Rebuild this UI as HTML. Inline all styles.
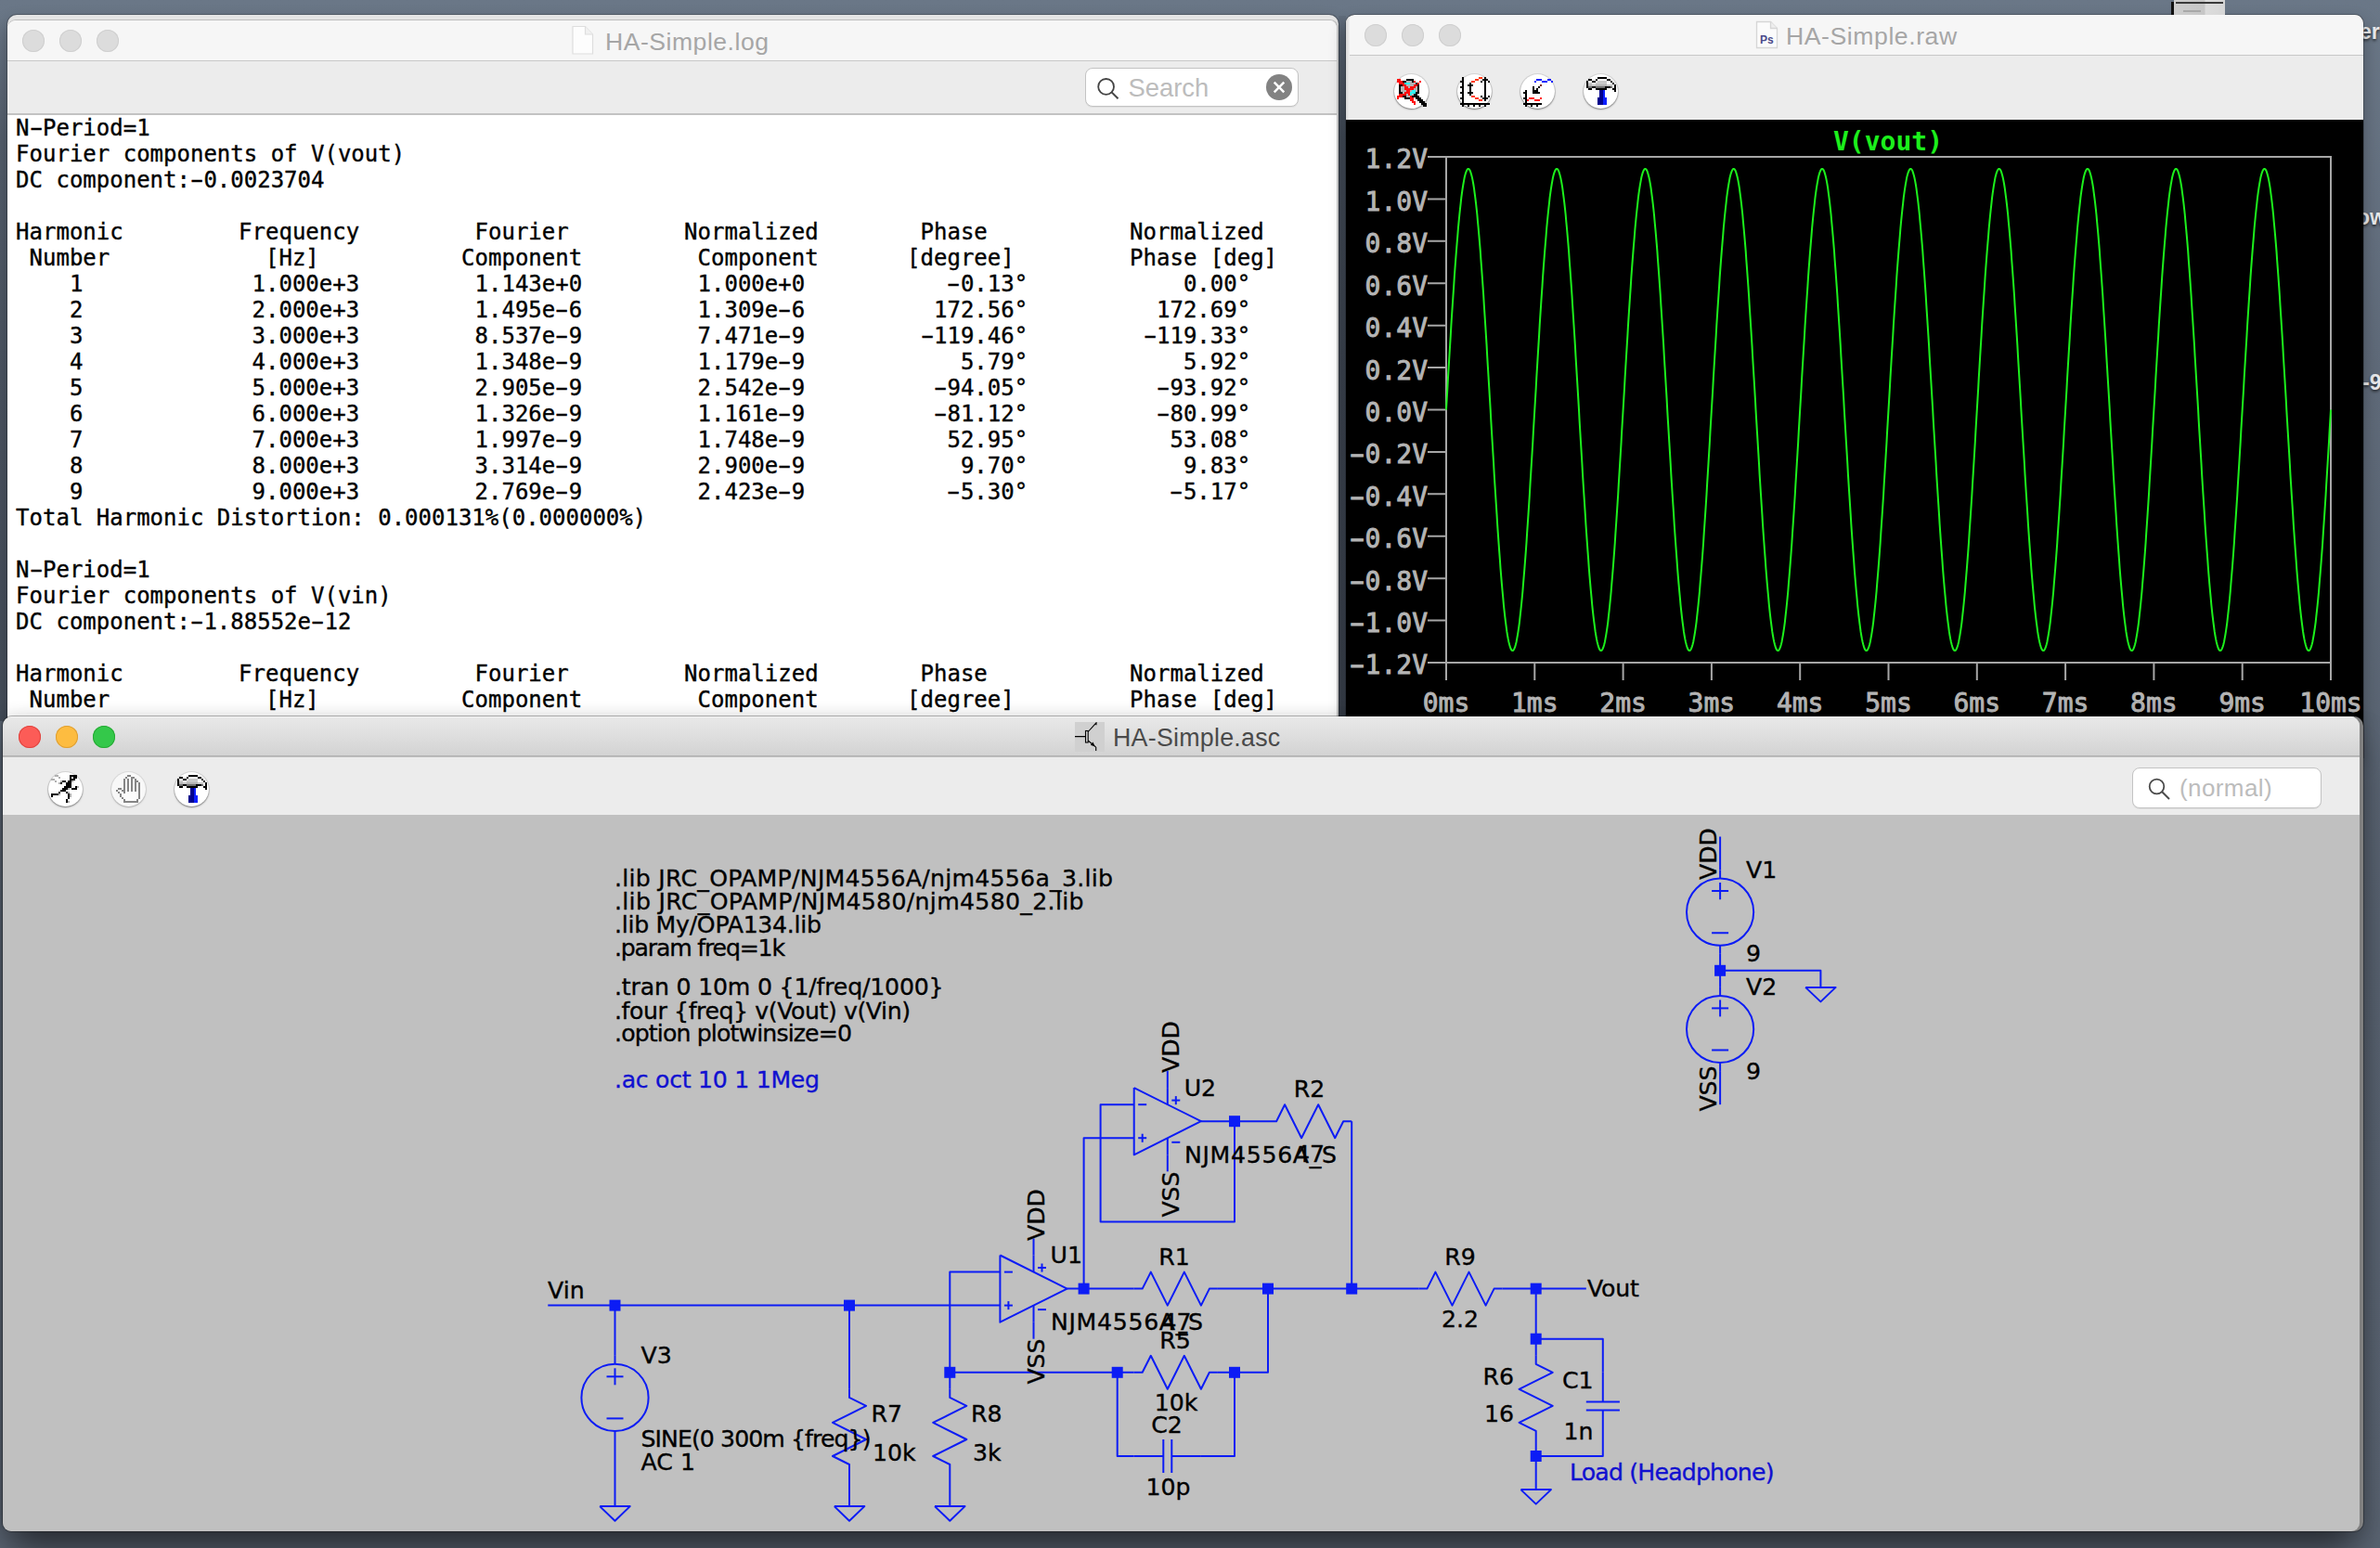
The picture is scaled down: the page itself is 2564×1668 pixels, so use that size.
<!DOCTYPE html>
<html lang="en">
<head>
<meta charset="utf-8">
<title>HA-Simple</title>
<style>
*{box-sizing:border-box;margin:0;padding:0}
html,body{width:2564px;height:1668px;overflow:hidden}
body{position:relative;font-family:"Liberation Sans",sans-serif;
 background:linear-gradient(180deg,#6a7787 0px,#5f6a79 400px,#586270 1000px,#5a6472 1668px);}
.abs{position:absolute}
.win{position:absolute;overflow:hidden}
.tl{position:absolute;width:24px;height:24px;border-radius:50%;}
.tl.off{background:#dcdcdc;box-shadow:inset 0 0 0 1px #cfcfcf}
.title{position:absolute;left:0;right:0;text-align:center;font-size:26px;white-space:nowrap}
.search{position:absolute;background:#fff;border:1px solid #c3c3c3;border-radius:8px;box-shadow:0 1px 0 rgba(0,0,0,.06)}
.search span{position:absolute;font-size:26px;color:#bcbcbc}
.ic{position:absolute;width:37px;height:37px;border-radius:50%;background:#fff;box-shadow:0 1px 2px rgba(0,0,0,.45),0 0 0 1px rgba(0,0,0,.08)}
.ic svg{position:absolute;left:0;top:0}
pre.log{position:absolute;left:0;top:102px;-webkit-text-stroke:.36px #000;width:1433px;padding-left:9.1px;font-family:"DejaVu Sans Mono","Liberation Mono",monospace;font-size:24px;line-height:28px;color:#000;tab-size:240px;-moz-tab-size:240px;white-space:pre;letter-spacing:0}
pre.log .h{display:inline-block;transform:scaleX(1.75)}
svg text{white-space:pre}
</style>
</head>
<body>

<!-- stacked window edges behind log window -->
<div class="abs" style="left:8px;top:16px;width:1434px;height:800px;border-radius:10px 10px 0 0;background:#e4e4e4;box-shadow:0 0 0 1px rgba(0,0,0,.22),0 8px 18px rgba(0,0,0,.3)"></div>

<!-- LOG WINDOW -->
<div class="win" id="logwin" style="left:8px;top:22px;width:1434px;height:780px;border-radius:9px 9px 0 0;background:#fff;box-shadow:0 -1px 0 #bdbdbd;border-right:2px solid #cbcbcb">
  <div class="abs" style="left:0;top:0;width:100%;height:44px;background:#f6f6f6;border-bottom:1px solid #c8c8c8"></div>
  <div class="tl off" style="left:16px;top:10px"></div>
  <div class="tl off" style="left:56px;top:10px"></div>
  <div class="tl off" style="left:96px;top:10px"></div>
  <svg class="abs" style="left:607px;top:5px" width="26" height="33" viewBox="0 0 26 33"><path d="M2 1.500h13.500l8 8.500v21h-21.500z" fill="#fdfdfd" stroke="#dedede" stroke-width="1.2"/><path d="M15.500 1.500v8.500h8" fill="#f1f1f1" stroke="#dedede" stroke-width="1.2"/></svg>
  <div class="title" style="top:7.500px;left:644px;right:auto;color:#a6a6a6;letter-spacing:.5px;font-size:26.6px">HA-Simple.log</div>
  <div class="abs" style="left:0;top:44px;width:100%;height:58px;background:#ececec;border-bottom:2px solid #c2c2c2"></div>
  <div class="search" style="left:1161px;top:51px;width:230px;height:42px">
    <svg class="abs" style="left:11px;top:9px" width="26" height="26" viewBox="0 0 26 26"><circle cx="10.6" cy="10.4" r="8.4" fill="none" stroke="#454545" stroke-width="1.8"/><path d="M16.600 16.400L23.500 23.300" stroke="#454545" stroke-width="2"/></svg>
    <span style="left:45.500px;top:4.500px;font-size:27.4px">Search</span>
    <svg class="abs" style="left:193px;top:5px" width="30" height="30" viewBox="0 0 30 30"><circle cx="15" cy="15" r="14" fill="#828282"/><path d="M9.700 9.700l10.600 10.600M20.300 9.700l-10.600 10.600" stroke="#fff" stroke-width="2.500"/></svg>
  </div>
<pre class="log">N<span class="h">-</span>Period=1
Fourier components of V(vout)
DC component:<span class="h">-</span>0.0023704

Harmonic	Frequency	 Fourier 	Normalized	 Phase  	Normalized
 Number 	  [Hz]   	Component	 Component	[degree]	Phase [deg]
    1   	 1.000e+3	 1.143e+0	 1.000e+0	   <span class="h">-</span>0.13°	    0.00°
    2   	 2.000e+3	 1.495e<span class="h">-</span>6	 1.309e<span class="h">-</span>6	  172.56°	  172.69°
    3   	 3.000e+3	 8.537e<span class="h">-</span>9	 7.471e<span class="h">-</span>9	 <span class="h">-</span>119.46°	 <span class="h">-</span>119.33°
    4   	 4.000e+3	 1.348e<span class="h">-</span>9	 1.179e<span class="h">-</span>9	    5.79°	    5.92°
    5   	 5.000e+3	 2.905e<span class="h">-</span>9	 2.542e<span class="h">-</span>9	  <span class="h">-</span>94.05°	  <span class="h">-</span>93.92°
    6   	 6.000e+3	 1.326e<span class="h">-</span>9	 1.161e<span class="h">-</span>9	  <span class="h">-</span>81.12°	  <span class="h">-</span>80.99°
    7   	 7.000e+3	 1.997e<span class="h">-</span>9	 1.748e<span class="h">-</span>9	   52.95°	   53.08°
    8   	 8.000e+3	 3.314e<span class="h">-</span>9	 2.900e<span class="h">-</span>9	    9.70°	    9.83°
    9   	 9.000e+3	 2.769e<span class="h">-</span>9	 2.423e<span class="h">-</span>9	   <span class="h">-</span>5.30°	   <span class="h">-</span>5.17°
Total Harmonic Distortion: 0.000131%(0.000000%)

N<span class="h">-</span>Period=1
Fourier components of V(vin)
DC component:<span class="h">-</span>1.88552e<span class="h">-</span>12

Harmonic	Frequency	 Fourier 	Normalized	 Phase  	Normalized
 Number 	  [Hz]   	Component	 Component	[degree]	Phase [deg]
</pre>
</div>

<!-- RAW WINDOW -->
<div class="abs" style="left:2542px;top:21px;font-size:23px;font-weight:bold;color:#e9eaec;text-shadow:0 2px 3px rgba(0,0,0,.6);white-space:nowrap">er</div>
<div class="abs" style="left:2539px;top:221px;font-size:23px;font-weight:bold;color:#e9eaec;text-shadow:0 2px 3px rgba(0,0,0,.6);white-space:nowrap">ow</div>
<div class="abs" style="left:2545px;top:399px;font-size:23px;font-weight:bold;color:#e9eaec;text-shadow:0 2px 3px rgba(0,0,0,.6);white-space:nowrap">-9</div>
<div class="win" id="rawwin" style="left:1450px;top:16px;width:1096px;height:800px;border-radius:9px 9px 0 0;background:#000;box-shadow:0 0 0 1px rgba(0,0,0,.22),0 8px 18px rgba(0,0,0,.3)">
  <div class="abs" style="left:0;top:112px"><svg class="plot" width="1096" height="650" viewBox="0 0 1096 650"><rect x="0" y="0" width="1096" height="650" fill="#000"/><rect x="108" y="41" width="953" height="545" fill="none" stroke="#a6a6a6" stroke-width="2"/><path d="M88 41.0H108M88 86.4H108M88 131.8H108M88 177.2H108M88 222.7H108M88 268.1H108M88 313.5H108M88 358.9H108M88 404.3H108M88 449.8H108M88 495.2H108M88 540.6H108M88 586.0H108M108.0 586V605M203.3 586V605M298.6 586V605M393.9 586V605M489.2 586V605M584.5 586V605M679.8 586V605M775.1 586V605M870.4 586V605M965.7 586V605M1061.0 586V605" stroke="#a6a6a6" stroke-width="2" fill="none"/><polyline points="108.0,313.5 108.7,301.9 109.4,290.2 110.0,278.7 110.7,267.2 111.4,255.7 112.1,244.4 112.8,233.3 113.4,222.3 114.1,211.5 114.8,200.9 115.5,190.5 116.2,180.4 116.8,170.5 117.5,160.9 118.2,151.7 118.9,142.7 119.6,134.1 120.3,125.9 120.9,118.0 121.6,110.6 122.3,103.5 123.0,96.9 123.7,90.7 124.3,84.9 125.0,79.6 125.7,74.8 126.4,70.5 127.1,66.6 127.7,63.3 128.4,60.5 129.1,58.1 129.8,56.3 130.5,55.0 131.1,54.2 131.8,53.9 132.5,54.2 133.2,55.0 133.9,56.3 134.5,58.1 135.2,60.5 135.9,63.3 136.6,66.6 137.3,70.5 138.0,74.8 138.6,79.6 139.3,84.9 140.0,90.7 140.7,96.9 141.4,103.5 142.0,110.6 142.7,118.0 143.4,125.9 144.1,134.1 144.8,142.7 145.4,151.7 146.1,160.9 146.8,170.5 147.5,180.4 148.2,190.5 148.8,200.9 149.5,211.5 150.2,222.3 150.9,233.3 151.6,244.4 152.2,255.7 152.9,267.2 153.6,278.7 154.3,290.2 155.0,301.9 155.7,313.5 156.3,325.1 157.0,336.8 157.7,348.3 158.4,359.8 159.1,371.3 159.7,382.6 160.4,393.7 161.1,404.7 161.8,415.5 162.5,426.1 163.1,436.5 163.8,446.6 164.5,456.5 165.2,466.1 165.9,475.3 166.5,484.3 167.2,492.9 167.9,501.1 168.6,509.0 169.3,516.4 169.9,523.5 170.6,530.1 171.3,536.3 172.0,542.1 172.7,547.4 173.3,552.2 174.0,556.5 174.7,560.4 175.4,563.7 176.1,566.5 176.8,568.9 177.4,570.7 178.1,572.0 178.8,572.8 179.5,573.1 180.2,572.8 180.8,572.0 181.5,570.7 182.2,568.9 182.9,566.5 183.6,563.7 184.2,560.4 184.9,556.5 185.6,552.2 186.3,547.4 187.0,542.1 187.6,536.3 188.3,530.1 189.0,523.5 189.7,516.4 190.4,509.0 191.0,501.1 191.7,492.9 192.4,484.3 193.1,475.3 193.8,466.1 194.5,456.5 195.1,446.6 195.8,436.5 196.5,426.1 197.2,415.5 197.9,404.7 198.5,393.7 199.2,382.6 199.9,371.3 200.6,359.8 201.3,348.3 201.9,336.8 202.6,325.1 203.3,313.5 204.0,301.9 204.7,290.2 205.3,278.7 206.0,267.2 206.7,255.7 207.4,244.4 208.1,233.3 208.7,222.3 209.4,211.5 210.1,200.9 210.8,190.5 211.5,180.4 212.1,170.5 212.8,160.9 213.5,151.7 214.2,142.7 214.9,134.1 215.6,125.9 216.2,118.0 216.9,110.6 217.6,103.5 218.3,96.9 219.0,90.7 219.6,84.9 220.3,79.6 221.0,74.8 221.7,70.5 222.4,66.6 223.0,63.3 223.7,60.5 224.4,58.1 225.1,56.3 225.8,55.0 226.4,54.2 227.1,53.9 227.8,54.2 228.5,55.0 229.2,56.3 229.8,58.1 230.5,60.5 231.2,63.3 231.9,66.6 232.6,70.5 233.3,74.8 233.9,79.6 234.6,84.9 235.3,90.7 236.0,96.9 236.7,103.5 237.3,110.6 238.0,118.0 238.7,125.9 239.4,134.1 240.1,142.7 240.7,151.7 241.4,160.9 242.1,170.5 242.8,180.4 243.5,190.5 244.1,200.9 244.8,211.5 245.5,222.3 246.2,233.3 246.9,244.4 247.5,255.7 248.2,267.2 248.9,278.7 249.6,290.2 250.3,301.9 251.0,313.5 251.6,325.1 252.3,336.8 253.0,348.3 253.7,359.8 254.4,371.3 255.0,382.6 255.7,393.7 256.4,404.7 257.1,415.5 257.8,426.1 258.4,436.5 259.1,446.6 259.8,456.5 260.5,466.1 261.2,475.3 261.8,484.3 262.5,492.9 263.2,501.1 263.9,509.0 264.6,516.4 265.2,523.5 265.9,530.1 266.6,536.3 267.3,542.1 268.0,547.4 268.6,552.2 269.3,556.5 270.0,560.4 270.7,563.7 271.4,566.5 272.1,568.9 272.7,570.7 273.4,572.0 274.1,572.8 274.8,573.1 275.5,572.8 276.1,572.0 276.8,570.7 277.5,568.9 278.2,566.5 278.9,563.7 279.5,560.4 280.2,556.5 280.9,552.2 281.6,547.4 282.3,542.1 282.9,536.3 283.6,530.1 284.3,523.5 285.0,516.4 285.7,509.0 286.3,501.1 287.0,492.9 287.7,484.3 288.4,475.3 289.1,466.1 289.8,456.5 290.4,446.6 291.1,436.5 291.8,426.1 292.5,415.5 293.2,404.7 293.8,393.7 294.5,382.6 295.2,371.3 295.9,359.8 296.6,348.3 297.2,336.8 297.9,325.1 298.6,313.5 299.3,301.9 300.0,290.2 300.6,278.7 301.3,267.2 302.0,255.7 302.7,244.4 303.4,233.3 304.0,222.3 304.7,211.5 305.4,200.9 306.1,190.5 306.8,180.4 307.4,170.5 308.1,160.9 308.8,151.7 309.5,142.7 310.2,134.1 310.9,125.9 311.5,118.0 312.2,110.6 312.9,103.5 313.6,96.9 314.3,90.7 314.9,84.9 315.6,79.6 316.3,74.8 317.0,70.5 317.7,66.6 318.3,63.3 319.0,60.5 319.7,58.1 320.4,56.3 321.1,55.0 321.7,54.2 322.4,53.9 323.1,54.2 323.8,55.0 324.5,56.3 325.1,58.1 325.8,60.5 326.5,63.3 327.2,66.6 327.9,70.5 328.6,74.8 329.2,79.6 329.9,84.9 330.6,90.7 331.3,96.9 332.0,103.5 332.6,110.6 333.3,118.0 334.0,125.9 334.7,134.1 335.4,142.7 336.0,151.7 336.7,160.9 337.4,170.5 338.1,180.4 338.8,190.5 339.4,200.9 340.1,211.5 340.8,222.3 341.5,233.3 342.2,244.4 342.8,255.7 343.5,267.2 344.2,278.7 344.9,290.2 345.6,301.9 346.2,313.5 346.9,325.1 347.6,336.8 348.3,348.3 349.0,359.8 349.7,371.3 350.3,382.6 351.0,393.7 351.7,404.7 352.4,415.5 353.1,426.1 353.7,436.5 354.4,446.6 355.1,456.5 355.8,466.1 356.5,475.3 357.1,484.3 357.8,492.9 358.5,501.1 359.2,509.0 359.9,516.4 360.5,523.5 361.2,530.1 361.9,536.3 362.6,542.1 363.3,547.4 363.9,552.2 364.6,556.5 365.3,560.4 366.0,563.7 366.7,566.5 367.4,568.9 368.0,570.7 368.7,572.0 369.4,572.8 370.1,573.1 370.8,572.8 371.4,572.0 372.1,570.7 372.8,568.9 373.5,566.5 374.2,563.7 374.8,560.4 375.5,556.5 376.2,552.2 376.9,547.4 377.6,542.1 378.2,536.3 378.9,530.1 379.6,523.5 380.3,516.4 381.0,509.0 381.6,501.1 382.3,492.9 383.0,484.3 383.7,475.3 384.4,466.1 385.1,456.5 385.7,446.6 386.4,436.5 387.1,426.1 387.8,415.5 388.5,404.7 389.1,393.7 389.8,382.6 390.5,371.3 391.2,359.8 391.9,348.3 392.5,336.8 393.2,325.1 393.9,313.5 394.6,301.9 395.3,290.2 395.9,278.7 396.6,267.2 397.3,255.7 398.0,244.4 398.7,233.3 399.3,222.3 400.0,211.5 400.7,200.9 401.4,190.5 402.1,180.4 402.7,170.5 403.4,160.9 404.1,151.7 404.8,142.7 405.5,134.1 406.2,125.9 406.8,118.0 407.5,110.6 408.2,103.5 408.9,96.9 409.6,90.7 410.2,84.9 410.9,79.6 411.6,74.8 412.3,70.5 413.0,66.6 413.6,63.3 414.3,60.5 415.0,58.1 415.7,56.3 416.4,55.0 417.0,54.2 417.7,53.9 418.4,54.2 419.1,55.0 419.8,56.3 420.4,58.1 421.1,60.5 421.8,63.3 422.5,66.6 423.2,70.5 423.9,74.8 424.5,79.6 425.2,84.9 425.9,90.7 426.6,96.9 427.3,103.5 427.9,110.6 428.6,118.0 429.3,125.9 430.0,134.1 430.7,142.7 431.3,151.7 432.0,160.9 432.7,170.5 433.4,180.4 434.1,190.5 434.7,200.9 435.4,211.5 436.1,222.3 436.8,233.3 437.5,244.4 438.1,255.7 438.8,267.2 439.5,278.7 440.2,290.2 440.9,301.9 441.5,313.5 442.2,325.1 442.9,336.8 443.6,348.3 444.3,359.8 445.0,371.3 445.6,382.6 446.3,393.7 447.0,404.7 447.7,415.5 448.4,426.1 449.0,436.5 449.7,446.6 450.4,456.5 451.1,466.1 451.8,475.3 452.4,484.3 453.1,492.9 453.8,501.1 454.5,509.0 455.2,516.4 455.8,523.5 456.5,530.1 457.2,536.3 457.9,542.1 458.6,547.4 459.2,552.2 459.9,556.5 460.6,560.4 461.3,563.7 462.0,566.5 462.7,568.9 463.3,570.7 464.0,572.0 464.7,572.8 465.4,573.1 466.1,572.8 466.7,572.0 467.4,570.7 468.1,568.9 468.8,566.5 469.5,563.7 470.1,560.4 470.8,556.5 471.5,552.2 472.2,547.4 472.9,542.1 473.5,536.3 474.2,530.1 474.9,523.5 475.6,516.4 476.3,509.0 476.9,501.1 477.6,492.9 478.3,484.3 479.0,475.3 479.7,466.1 480.4,456.5 481.0,446.6 481.7,436.5 482.4,426.1 483.1,415.5 483.8,404.7 484.4,393.7 485.1,382.6 485.8,371.3 486.5,359.8 487.2,348.3 487.8,336.8 488.5,325.1 489.2,313.5 489.9,301.9 490.6,290.2 491.2,278.7 491.9,267.2 492.6,255.7 493.3,244.4 494.0,233.3 494.6,222.3 495.3,211.5 496.0,200.9 496.7,190.5 497.4,180.4 498.0,170.5 498.7,160.9 499.4,151.7 500.1,142.7 500.8,134.1 501.5,125.9 502.1,118.0 502.8,110.6 503.5,103.5 504.2,96.9 504.9,90.7 505.5,84.9 506.2,79.6 506.9,74.8 507.6,70.5 508.3,66.6 508.9,63.3 509.6,60.5 510.3,58.1 511.0,56.3 511.7,55.0 512.3,54.2 513.0,53.9 513.7,54.2 514.4,55.0 515.1,56.3 515.7,58.1 516.4,60.5 517.1,63.3 517.8,66.6 518.5,70.5 519.2,74.8 519.8,79.6 520.5,84.9 521.2,90.7 521.9,96.9 522.6,103.5 523.2,110.6 523.9,118.0 524.6,125.9 525.3,134.1 526.0,142.7 526.6,151.7 527.3,160.9 528.0,170.5 528.7,180.4 529.4,190.5 530.0,200.9 530.7,211.5 531.4,222.3 532.1,233.3 532.8,244.4 533.4,255.7 534.1,267.2 534.8,278.7 535.5,290.2 536.2,301.9 536.8,313.5 537.5,325.1 538.2,336.8 538.9,348.3 539.6,359.8 540.3,371.3 540.9,382.6 541.6,393.7 542.3,404.7 543.0,415.5 543.7,426.1 544.3,436.5 545.0,446.6 545.7,456.5 546.4,466.1 547.1,475.3 547.7,484.3 548.4,492.9 549.1,501.1 549.8,509.0 550.5,516.4 551.1,523.5 551.8,530.1 552.5,536.3 553.2,542.1 553.9,547.4 554.5,552.2 555.2,556.5 555.9,560.4 556.6,563.7 557.3,566.5 558.0,568.9 558.6,570.7 559.3,572.0 560.0,572.8 560.7,573.1 561.4,572.8 562.0,572.0 562.7,570.7 563.4,568.9 564.1,566.5 564.8,563.7 565.4,560.4 566.1,556.5 566.8,552.2 567.5,547.4 568.2,542.1 568.8,536.3 569.5,530.1 570.2,523.5 570.9,516.4 571.6,509.0 572.2,501.1 572.9,492.9 573.6,484.3 574.3,475.3 575.0,466.1 575.7,456.5 576.3,446.6 577.0,436.5 577.7,426.1 578.4,415.5 579.1,404.7 579.7,393.7 580.4,382.6 581.1,371.3 581.8,359.8 582.5,348.3 583.1,336.8 583.8,325.1 584.5,313.5 585.2,301.9 585.9,290.2 586.5,278.7 587.2,267.2 587.9,255.7 588.6,244.4 589.3,233.3 589.9,222.3 590.6,211.5 591.3,200.9 592.0,190.5 592.7,180.4 593.3,170.5 594.0,160.9 594.7,151.7 595.4,142.7 596.1,134.1 596.8,125.9 597.4,118.0 598.1,110.6 598.8,103.5 599.5,96.9 600.2,90.7 600.8,84.9 601.5,79.6 602.2,74.8 602.9,70.5 603.6,66.6 604.2,63.3 604.9,60.5 605.6,58.1 606.3,56.3 607.0,55.0 607.6,54.2 608.3,53.9 609.0,54.2 609.7,55.0 610.4,56.3 611.0,58.1 611.7,60.5 612.4,63.3 613.1,66.6 613.8,70.5 614.5,74.8 615.1,79.6 615.8,84.9 616.5,90.7 617.2,96.9 617.9,103.5 618.5,110.6 619.2,118.0 619.9,125.9 620.6,134.1 621.3,142.7 621.9,151.7 622.6,160.9 623.3,170.5 624.0,180.4 624.7,190.5 625.3,200.9 626.0,211.5 626.7,222.3 627.4,233.3 628.1,244.4 628.7,255.7 629.4,267.2 630.1,278.7 630.8,290.2 631.5,301.9 632.2,313.5 632.8,325.1 633.5,336.8 634.2,348.3 634.9,359.8 635.6,371.3 636.2,382.6 636.9,393.7 637.6,404.7 638.3,415.5 639.0,426.1 639.6,436.5 640.3,446.6 641.0,456.5 641.7,466.1 642.4,475.3 643.0,484.3 643.7,492.9 644.4,501.1 645.1,509.0 645.8,516.4 646.4,523.5 647.1,530.1 647.8,536.3 648.5,542.1 649.2,547.4 649.8,552.2 650.5,556.5 651.2,560.4 651.9,563.7 652.6,566.5 653.3,568.9 653.9,570.7 654.6,572.0 655.3,572.8 656.0,573.1 656.7,572.8 657.3,572.0 658.0,570.7 658.7,568.9 659.4,566.5 660.1,563.7 660.7,560.4 661.4,556.5 662.1,552.2 662.8,547.4 663.5,542.1 664.1,536.3 664.8,530.1 665.5,523.5 666.2,516.4 666.9,509.0 667.5,501.1 668.2,492.9 668.9,484.3 669.6,475.3 670.3,466.1 671.0,456.5 671.6,446.6 672.3,436.5 673.0,426.1 673.7,415.5 674.4,404.7 675.0,393.7 675.7,382.6 676.4,371.3 677.1,359.8 677.8,348.3 678.4,336.8 679.1,325.1 679.8,313.5 680.5,301.9 681.2,290.2 681.8,278.7 682.5,267.2 683.2,255.7 683.9,244.4 684.6,233.3 685.2,222.3 685.9,211.5 686.6,200.9 687.3,190.5 688.0,180.4 688.6,170.5 689.3,160.9 690.0,151.7 690.7,142.7 691.4,134.1 692.1,125.9 692.7,118.0 693.4,110.6 694.1,103.5 694.8,96.9 695.5,90.7 696.1,84.9 696.8,79.6 697.5,74.8 698.2,70.5 698.9,66.6 699.5,63.3 700.2,60.5 700.9,58.1 701.6,56.3 702.3,55.0 702.9,54.2 703.6,53.9 704.3,54.2 705.0,55.0 705.7,56.3 706.3,58.1 707.0,60.5 707.7,63.3 708.4,66.6 709.1,70.5 709.8,74.8 710.4,79.6 711.1,84.9 711.8,90.7 712.5,96.9 713.2,103.5 713.8,110.6 714.5,118.0 715.2,125.9 715.9,134.1 716.6,142.7 717.2,151.7 717.9,160.9 718.6,170.5 719.3,180.4 720.0,190.5 720.6,200.9 721.3,211.5 722.0,222.3 722.7,233.3 723.4,244.4 724.0,255.7 724.7,267.2 725.4,278.7 726.1,290.2 726.8,301.9 727.4,313.5 728.1,325.1 728.8,336.8 729.5,348.3 730.2,359.8 730.9,371.3 731.5,382.6 732.2,393.7 732.9,404.7 733.6,415.5 734.3,426.1 734.9,436.5 735.6,446.6 736.3,456.5 737.0,466.1 737.7,475.3 738.3,484.3 739.0,492.9 739.7,501.1 740.4,509.0 741.1,516.4 741.7,523.5 742.4,530.1 743.1,536.3 743.8,542.1 744.5,547.4 745.1,552.2 745.8,556.5 746.5,560.4 747.2,563.7 747.9,566.5 748.6,568.9 749.2,570.7 749.9,572.0 750.6,572.8 751.3,573.1 752.0,572.8 752.6,572.0 753.3,570.7 754.0,568.9 754.7,566.5 755.4,563.7 756.0,560.4 756.7,556.5 757.4,552.2 758.1,547.4 758.8,542.1 759.4,536.3 760.1,530.1 760.8,523.5 761.5,516.4 762.2,509.0 762.8,501.1 763.5,492.9 764.2,484.3 764.9,475.3 765.6,466.1 766.3,456.5 766.9,446.6 767.6,436.5 768.3,426.1 769.0,415.5 769.7,404.7 770.3,393.7 771.0,382.6 771.7,371.3 772.4,359.8 773.1,348.3 773.7,336.8 774.4,325.1 775.1,313.5 775.8,301.9 776.5,290.2 777.1,278.7 777.8,267.2 778.5,255.7 779.2,244.4 779.9,233.3 780.5,222.3 781.2,211.5 781.9,200.9 782.6,190.5 783.3,180.4 783.9,170.5 784.6,160.9 785.3,151.7 786.0,142.7 786.7,134.1 787.4,125.9 788.0,118.0 788.7,110.6 789.4,103.5 790.1,96.9 790.8,90.7 791.4,84.9 792.1,79.6 792.8,74.8 793.5,70.5 794.2,66.6 794.8,63.3 795.5,60.5 796.2,58.1 796.9,56.3 797.6,55.0 798.2,54.2 798.9,53.9 799.6,54.2 800.3,55.0 801.0,56.3 801.6,58.1 802.3,60.5 803.0,63.3 803.7,66.6 804.4,70.5 805.1,74.8 805.7,79.6 806.4,84.9 807.1,90.7 807.8,96.9 808.5,103.5 809.1,110.6 809.8,118.0 810.5,125.9 811.2,134.1 811.9,142.7 812.5,151.7 813.2,160.9 813.9,170.5 814.6,180.4 815.3,190.5 815.9,200.9 816.6,211.5 817.3,222.3 818.0,233.3 818.7,244.4 819.3,255.7 820.0,267.2 820.7,278.7 821.4,290.2 822.1,301.9 822.8,313.5 823.4,325.1 824.1,336.8 824.8,348.3 825.5,359.8 826.2,371.3 826.8,382.6 827.5,393.7 828.2,404.7 828.9,415.5 829.6,426.1 830.2,436.5 830.9,446.6 831.6,456.5 832.3,466.1 833.0,475.3 833.6,484.3 834.3,492.9 835.0,501.1 835.7,509.0 836.4,516.4 837.0,523.5 837.7,530.1 838.4,536.3 839.1,542.1 839.8,547.4 840.4,552.2 841.1,556.5 841.8,560.4 842.5,563.7 843.2,566.5 843.9,568.9 844.5,570.7 845.2,572.0 845.9,572.8 846.6,573.1 847.3,572.8 847.9,572.0 848.6,570.7 849.3,568.9 850.0,566.5 850.7,563.7 851.3,560.4 852.0,556.5 852.7,552.2 853.4,547.4 854.1,542.1 854.7,536.3 855.4,530.1 856.1,523.5 856.8,516.4 857.5,509.0 858.1,501.1 858.8,492.9 859.5,484.3 860.2,475.3 860.9,466.1 861.6,456.5 862.2,446.6 862.9,436.5 863.6,426.1 864.3,415.5 865.0,404.7 865.6,393.7 866.3,382.6 867.0,371.3 867.7,359.8 868.4,348.3 869.0,336.8 869.7,325.1 870.4,313.5 871.1,301.9 871.8,290.2 872.4,278.7 873.1,267.2 873.8,255.7 874.5,244.4 875.2,233.3 875.8,222.3 876.5,211.5 877.2,200.9 877.9,190.5 878.6,180.4 879.2,170.5 879.9,160.9 880.6,151.7 881.3,142.7 882.0,134.1 882.7,125.9 883.3,118.0 884.0,110.6 884.7,103.5 885.4,96.9 886.1,90.7 886.7,84.9 887.4,79.6 888.1,74.8 888.8,70.5 889.5,66.6 890.1,63.3 890.8,60.5 891.5,58.1 892.2,56.3 892.9,55.0 893.5,54.2 894.2,53.9 894.9,54.2 895.6,55.0 896.3,56.3 896.9,58.1 897.6,60.5 898.3,63.3 899.0,66.6 899.7,70.5 900.4,74.8 901.0,79.6 901.7,84.9 902.4,90.7 903.1,96.9 903.8,103.5 904.4,110.6 905.1,118.0 905.8,125.9 906.5,134.1 907.2,142.7 907.8,151.7 908.5,160.9 909.2,170.5 909.9,180.4 910.6,190.5 911.2,200.9 911.9,211.5 912.6,222.3 913.3,233.3 914.0,244.4 914.6,255.7 915.3,267.2 916.0,278.7 916.7,290.2 917.4,301.9 918.1,313.5 918.7,325.1 919.4,336.8 920.1,348.3 920.8,359.8 921.5,371.3 922.1,382.6 922.8,393.7 923.5,404.7 924.2,415.5 924.9,426.1 925.5,436.5 926.2,446.6 926.9,456.5 927.6,466.1 928.3,475.3 928.9,484.3 929.6,492.9 930.3,501.1 931.0,509.0 931.7,516.4 932.3,523.5 933.0,530.1 933.7,536.3 934.4,542.1 935.1,547.4 935.7,552.2 936.4,556.5 937.1,560.4 937.8,563.7 938.5,566.5 939.2,568.9 939.8,570.7 940.5,572.0 941.2,572.8 941.9,573.1 942.6,572.8 943.2,572.0 943.9,570.7 944.6,568.9 945.3,566.5 946.0,563.7 946.6,560.4 947.3,556.5 948.0,552.2 948.7,547.4 949.4,542.1 950.0,536.3 950.7,530.1 951.4,523.5 952.1,516.4 952.8,509.0 953.4,501.1 954.1,492.9 954.8,484.3 955.5,475.3 956.2,466.1 956.9,456.5 957.5,446.6 958.2,436.5 958.9,426.1 959.6,415.5 960.3,404.7 960.9,393.7 961.6,382.6 962.3,371.3 963.0,359.8 963.7,348.3 964.3,336.8 965.0,325.1 965.7,313.5 966.4,301.9 967.1,290.2 967.7,278.7 968.4,267.2 969.1,255.7 969.8,244.4 970.5,233.3 971.1,222.3 971.8,211.5 972.5,200.9 973.2,190.5 973.9,180.4 974.5,170.5 975.2,160.9 975.9,151.7 976.6,142.7 977.3,134.1 978.0,125.9 978.6,118.0 979.3,110.6 980.0,103.5 980.7,96.9 981.4,90.7 982.0,84.9 982.7,79.6 983.4,74.8 984.1,70.5 984.8,66.6 985.4,63.3 986.1,60.5 986.8,58.1 987.5,56.3 988.2,55.0 988.8,54.2 989.5,53.9 990.2,54.2 990.9,55.0 991.6,56.3 992.2,58.1 992.9,60.5 993.6,63.3 994.3,66.6 995.0,70.5 995.7,74.8 996.3,79.6 997.0,84.9 997.7,90.7 998.4,96.9 999.1,103.5 999.7,110.6 1000.4,118.0 1001.1,125.9 1001.8,134.1 1002.5,142.7 1003.1,151.7 1003.8,160.9 1004.5,170.5 1005.2,180.4 1005.9,190.5 1006.5,200.9 1007.2,211.5 1007.9,222.3 1008.6,233.3 1009.3,244.4 1009.9,255.7 1010.6,267.2 1011.3,278.7 1012.0,290.2 1012.7,301.9 1013.3,313.5 1014.0,325.1 1014.7,336.8 1015.4,348.3 1016.1,359.8 1016.8,371.3 1017.4,382.6 1018.1,393.7 1018.8,404.7 1019.5,415.5 1020.2,426.1 1020.8,436.5 1021.5,446.6 1022.2,456.5 1022.9,466.1 1023.6,475.3 1024.2,484.3 1024.9,492.9 1025.6,501.1 1026.3,509.0 1027.0,516.4 1027.6,523.5 1028.3,530.1 1029.0,536.3 1029.7,542.1 1030.4,547.4 1031.0,552.2 1031.7,556.5 1032.4,560.4 1033.1,563.7 1033.8,566.5 1034.5,568.9 1035.1,570.7 1035.8,572.0 1036.5,572.8 1037.2,573.1 1037.9,572.8 1038.5,572.0 1039.2,570.7 1039.9,568.9 1040.6,566.5 1041.3,563.7 1041.9,560.4 1042.6,556.5 1043.3,552.2 1044.0,547.4 1044.7,542.1 1045.3,536.3 1046.0,530.1 1046.7,523.5 1047.4,516.4 1048.1,509.0 1048.7,501.1 1049.4,492.9 1050.1,484.3 1050.8,475.3 1051.5,466.1 1052.2,456.5 1052.8,446.6 1053.5,436.5 1054.2,426.1 1054.9,415.5 1055.6,404.7 1056.2,393.7 1056.9,382.6 1057.6,371.3 1058.3,359.8 1059.0,348.3 1059.6,336.8 1060.3,325.1 1061.0,313.5" fill="none" stroke="#1cf01c" stroke-width="2" stroke-linejoin="round"/><g font-family="'DejaVu Sans Mono','Liberation Mono',monospace" font-size="28" fill="#b4b4b4" stroke="#b4b4b4" stroke-width="0.95"><text x="88" y="53.4" text-anchor="end">1.2V</text><text x="88" y="98.8" text-anchor="end">1.0V</text><text x="88" y="144.2" text-anchor="end">0.8V</text><text x="88" y="189.7" text-anchor="end">0.6V</text><text x="88" y="235.1" text-anchor="end">0.4V</text><text x="88" y="280.5" text-anchor="end">0.2V</text><text x="88" y="325.9" text-anchor="end">0.0V</text><text transform="translate(12.1,371.3) scale(1.7,1)" text-anchor="middle">-</text><text x="88" y="371.3" text-anchor="end">0.2V</text><text transform="translate(12.1,416.7) scale(1.7,1)" text-anchor="middle">-</text><text x="88" y="416.7" text-anchor="end">0.4V</text><text transform="translate(12.1,462.1) scale(1.7,1)" text-anchor="middle">-</text><text x="88" y="462.1" text-anchor="end">0.6V</text><text transform="translate(12.1,507.6) scale(1.7,1)" text-anchor="middle">-</text><text x="88" y="507.6" text-anchor="end">0.8V</text><text transform="translate(12.1,553.0) scale(1.7,1)" text-anchor="middle">-</text><text x="88" y="553.0" text-anchor="end">1.0V</text><text transform="translate(12.1,598.4) scale(1.7,1)" text-anchor="middle">-</text><text x="88" y="598.4" text-anchor="end">1.2V</text><text x="108.0" y="638.5" text-anchor="middle">0ms</text><text x="203.3" y="638.5" text-anchor="middle">1ms</text><text x="298.6" y="638.5" text-anchor="middle">2ms</text><text x="393.9" y="638.5" text-anchor="middle">3ms</text><text x="489.2" y="638.5" text-anchor="middle">4ms</text><text x="584.5" y="638.5" text-anchor="middle">5ms</text><text x="679.8" y="638.5" text-anchor="middle">6ms</text><text x="775.1" y="638.5" text-anchor="middle">7ms</text><text x="870.4" y="638.5" text-anchor="middle">8ms</text><text x="965.7" y="638.5" text-anchor="middle">9ms</text><text x="1061.0" y="638.5" text-anchor="middle">10ms</text></g><text x="584.0" y="34" text-anchor="middle" font-family="'DejaVu Sans Mono','Liberation Mono',monospace" font-weight="bold" font-size="28" fill="#1cf01c">V(vout)</text></svg></div>
  <div class="abs" style="left:0;top:0;width:100%;height:44px;background:#f6f6f6;border-bottom:1px solid #c8c8c8"></div>
  <div class="abs" style="left:0;top:0;width:4px;height:113px;background:linear-gradient(90deg,#d8d8d8,#efefef)"></div>
  <div class="tl off" style="left:20px;top:10px"></div>
  <div class="tl off" style="left:60px;top:10px"></div>
  <div class="tl off" style="left:100px;top:10px"></div>
  <svg class="abs" style="left:441px;top:6px" width="25" height="31" viewBox="0 0 25 31"><path d="M1.500 1.500h15l7 7v21h-22z" fill="#fbfbfb" stroke="#d6d6d6" stroke-width="1.3"/><path d="M16.500 1.500v7h7" fill="#eee" stroke="#d6d6d6" stroke-width="1.3"/><text x="5" y="25" font-family="'Liberation Sans',sans-serif" font-weight="bold" font-size="12" fill="#4a4a8a">Ps</text></svg>
  <div class="title" style="top:7.500px;left:474px;right:auto;color:#a6a6a6;letter-spacing:.57px;font-size:26.6px">HA-Simple.raw</div>
  <div class="abs" style="left:4px;top:44px;right:0;height:69px;background:#ececec"></div>
  <div class="ic" style="left:52px;top:64px"><svg width="37" height="37" viewBox="0 0 37 37" shape-rendering="crispEdges"><rect x="2.5" y="4.5" width="4" height="2" fill="#ff1010"/><rect x="12.5" y="4.5" width="8" height="2" fill="#000"/><rect x="2.5" y="6.5" width="6" height="2" fill="#ff1010"/><rect x="8.5" y="6.5" width="4" height="2" fill="#000"/><rect x="12.5" y="6.5" width="6" height="2" fill="#b4b4b4"/><rect x="18.5" y="6.5" width="2" height="2" fill="#000"/><rect x="20.5" y="6.5" width="2" height="2" fill="#ff1010"/><rect x="26.5" y="6.5" width="2" height="2" fill="#ff1010"/><rect x="4.5" y="8.5" width="6" height="2" fill="#ff1010"/><rect x="10.5" y="8.5" width="6" height="2" fill="#30f6f6"/><rect x="16.5" y="8.5" width="6" height="2" fill="#b4b4b4"/><rect x="22.5" y="8.5" width="2" height="2" fill="#000"/><rect x="24.5" y="8.5" width="2" height="2" fill="#ff1010"/><rect x="4.5" y="10.5" width="4" height="2" fill="#000"/><rect x="8.5" y="10.5" width="4" height="2" fill="#ff1010"/><rect x="12.5" y="10.5" width="8" height="2" fill="#b4b4b4"/><rect x="20.5" y="10.5" width="4" height="2" fill="#ff1010"/><rect x="24.5" y="10.5" width="2" height="2" fill="#000"/><rect x="4.5" y="12.5" width="2" height="2" fill="#000"/><rect x="6.5" y="12.5" width="4" height="2" fill="#b4b4b4"/><rect x="10.5" y="12.5" width="4" height="2" fill="#ff1010"/><rect x="14.5" y="12.5" width="2" height="2" fill="#b4b4b4"/><rect x="16.5" y="12.5" width="6" height="2" fill="#ff1010"/><rect x="22.5" y="12.5" width="2" height="2" fill="#b4b4b4"/><rect x="24.5" y="12.5" width="2" height="2" fill="#000"/><rect x="4.5" y="14.5" width="2" height="2" fill="#000"/><rect x="6.5" y="14.5" width="4" height="2" fill="#b4b4b4"/><rect x="10.5" y="14.5" width="10" height="2" fill="#ff1010"/><rect x="20.5" y="14.5" width="4" height="2" fill="#b4b4b4"/><rect x="24.5" y="14.5" width="2" height="2" fill="#000"/><rect x="4.5" y="16.5" width="2" height="2" fill="#000"/><rect x="6.5" y="16.5" width="6" height="2" fill="#b4b4b4"/><rect x="12.5" y="16.5" width="4" height="2" fill="#ff1010"/><rect x="16.5" y="16.5" width="2" height="2" fill="#b4b4b4"/><rect x="18.5" y="16.5" width="4" height="2" fill="#30f6f6"/><rect x="22.5" y="16.5" width="2" height="2" fill="#b4b4b4"/><rect x="24.5" y="16.5" width="2" height="2" fill="#000"/><rect x="4.5" y="18.5" width="4" height="2" fill="#000"/><rect x="8.5" y="18.5" width="2" height="2" fill="#b4b4b4"/><rect x="10.5" y="18.5" width="6" height="2" fill="#ff1010"/><rect x="16.5" y="18.5" width="6" height="2" fill="#30f6f6"/><rect x="22.5" y="18.5" width="4" height="2" fill="#000"/><rect x="4.5" y="20.5" width="8" height="2" fill="#ff1010"/><rect x="12.5" y="20.5" width="2" height="2" fill="#b4b4b4"/><rect x="14.5" y="20.5" width="2" height="2" fill="#ff1010"/><rect x="16.5" y="20.5" width="2" height="2" fill="#30f6f6"/><rect x="18.5" y="20.5" width="2" height="2" fill="#b4b4b4"/><rect x="20.5" y="20.5" width="4" height="2" fill="#000"/><rect x="2.5" y="22.5" width="6" height="2" fill="#ff1010"/><rect x="8.5" y="22.5" width="4" height="2" fill="#000"/><rect x="12.5" y="22.5" width="4" height="2" fill="#b4b4b4"/><rect x="16.5" y="22.5" width="2" height="2" fill="#ff1010"/><rect x="18.5" y="22.5" width="8" height="2" fill="#000"/><rect x="2.5" y="24.5" width="2" height="2" fill="#ff1010"/><rect x="10.5" y="24.5" width="6" height="2" fill="#000"/><rect x="16.5" y="24.5" width="4" height="2" fill="#ff1010"/><rect x="22.5" y="24.5" width="6" height="2" fill="#000"/><rect x="16.5" y="26.5" width="4" height="2" fill="#ff1010"/><rect x="24.5" y="26.5" width="6" height="2" fill="#000"/><rect x="18.5" y="28.5" width="4" height="2" fill="#ff1010"/><rect x="26.5" y="28.5" width="6" height="2" fill="#000"/><rect x="20.5" y="30.5" width="2" height="2" fill="#ff1010"/><rect x="28.5" y="30.5" width="6" height="2" fill="#000"/><rect x="30.5" y="32.5" width="4" height="2" fill="#000"/></svg></div>
  <div class="ic" style="left:120px;top:64px"><svg width="37" height="37" viewBox="0 0 37 37" shape-rendering="crispEdges"><rect x="4.5" y="2.5" width="2" height="2" fill="#000"/><rect x="22.5" y="2.5" width="4" height="2" fill="#ff3a14"/><rect x="28.5" y="2.5" width="2" height="2" fill="#000"/><rect x="4.5" y="4.5" width="2" height="2" fill="#000"/><rect x="18.5" y="4.5" width="4" height="2" fill="#ff3a14"/><rect x="26.5" y="4.5" width="6" height="2" fill="#000"/><rect x="2.5" y="6.5" width="4" height="2" fill="#000"/><rect x="14.5" y="6.5" width="4" height="2" fill="#ff3a14"/><rect x="24.5" y="6.5" width="2" height="2" fill="#000"/><rect x="28.5" y="6.5" width="2" height="2" fill="#000"/><rect x="32.5" y="6.5" width="2" height="2" fill="#000"/><rect x="4.5" y="8.5" width="2" height="2" fill="#000"/><rect x="12.5" y="8.5" width="2" height="2" fill="#000"/><rect x="28.5" y="8.5" width="2" height="2" fill="#000"/><rect x="4.5" y="10.5" width="2" height="2" fill="#000"/><rect x="10.5" y="10.5" width="6" height="2" fill="#000"/><rect x="28.5" y="10.5" width="2" height="2" fill="#000"/><rect x="2.5" y="12.5" width="4" height="2" fill="#000"/><rect x="12.5" y="12.5" width="2" height="2" fill="#000"/><rect x="28.5" y="12.5" width="2" height="2" fill="#000"/><rect x="4.5" y="14.5" width="2" height="2" fill="#000"/><rect x="12.5" y="14.5" width="2" height="2" fill="#000"/><rect x="28.5" y="14.5" width="2" height="2" fill="#000"/><rect x="4.5" y="16.5" width="2" height="2" fill="#000"/><rect x="12.5" y="16.5" width="2" height="2" fill="#000"/><rect x="28.5" y="16.5" width="2" height="2" fill="#000"/><rect x="2.5" y="18.5" width="4" height="2" fill="#000"/><rect x="10.5" y="18.5" width="6" height="2" fill="#000"/><rect x="28.5" y="18.5" width="2" height="2" fill="#000"/><rect x="4.5" y="20.5" width="2" height="2" fill="#000"/><rect x="12.5" y="20.5" width="2" height="2" fill="#000"/><rect x="28.5" y="20.5" width="2" height="2" fill="#000"/><rect x="4.5" y="22.5" width="2" height="2" fill="#000"/><rect x="14.5" y="22.5" width="4" height="2" fill="#ff3a14"/><rect x="24.5" y="22.5" width="2" height="2" fill="#000"/><rect x="28.5" y="22.5" width="2" height="2" fill="#000"/><rect x="32.5" y="22.5" width="2" height="2" fill="#000"/><rect x="2.5" y="24.5" width="4" height="2" fill="#000"/><rect x="18.5" y="24.5" width="4" height="2" fill="#ff3a14"/><rect x="26.5" y="24.5" width="6" height="2" fill="#000"/><rect x="4.5" y="26.5" width="2" height="2" fill="#000"/><rect x="22.5" y="26.5" width="4" height="2" fill="#ff3a14"/><rect x="28.5" y="26.5" width="2" height="2" fill="#000"/><rect x="4.5" y="28.5" width="2" height="2" fill="#000"/><rect x="2.5" y="30.5" width="32" height="2" fill="#000"/><rect x="4.5" y="32.5" width="2" height="2" fill="#000"/><rect x="10.5" y="32.5" width="2" height="2" fill="#000"/><rect x="16.5" y="32.5" width="2" height="2" fill="#000"/><rect x="22.5" y="32.5" width="2" height="2" fill="#000"/><rect x="28.5" y="32.5" width="2" height="2" fill="#000"/></svg></div>
  <div class="ic" style="left:188px;top:64px"><svg width="37" height="37" viewBox="0 0 37 37" shape-rendering="crispEdges"><rect x="16.5" y="4.5" width="6" height="2" fill="#0a1eff"/><rect x="28.5" y="4.5" width="4" height="2" fill="#0a1eff"/><rect x="14.5" y="6.5" width="2" height="2" fill="#0a1eff"/><rect x="22.5" y="6.5" width="6" height="2" fill="#0a1eff"/><rect x="32.5" y="6.5" width="2" height="2" fill="#0a1eff"/><rect x="20.5" y="10.5" width="2" height="2" fill="#7a1010"/><rect x="12.5" y="12.5" width="2" height="2" fill="#000"/><rect x="18.5" y="12.5" width="2" height="2" fill="#000"/><rect x="12.5" y="14.5" width="2" height="2" fill="#000"/><rect x="16.5" y="14.5" width="2" height="2" fill="#000"/><rect x="4.5" y="16.5" width="2" height="2" fill="#000"/><rect x="12.5" y="16.5" width="6" height="2" fill="#000"/><rect x="2.5" y="18.5" width="4" height="2" fill="#000"/><rect x="12.5" y="18.5" width="8" height="2" fill="#000"/><rect x="4.5" y="20.5" width="2" height="2" fill="#000"/><rect x="4.5" y="22.5" width="2" height="2" fill="#000"/><rect x="2.5" y="24.5" width="4" height="2" fill="#000"/><rect x="8.5" y="24.5" width="6" height="2" fill="#ff1010"/><rect x="20.5" y="24.5" width="2" height="2" fill="#ff1010"/><rect x="4.5" y="26.5" width="2" height="2" fill="#000"/><rect x="6.5" y="26.5" width="2" height="2" fill="#ff1010"/><rect x="14.5" y="26.5" width="6" height="2" fill="#ff1010"/><rect x="4.5" y="28.5" width="2" height="2" fill="#000"/><rect x="2.5" y="30.5" width="20" height="2" fill="#000"/><rect x="4.5" y="32.5" width="2" height="2" fill="#000"/><rect x="10.5" y="32.5" width="2" height="2" fill="#000"/><rect x="16.5" y="32.5" width="2" height="2" fill="#000"/></svg></div>
  <div class="ic" style="left:256px;top:64px"><svg width="37" height="37" viewBox="0 0 37 37" shape-rendering="crispEdges"><rect x="14.5" y="2.5" width="10" height="2" fill="#000"/><rect x="4.5" y="4.5" width="4" height="2" fill="#000"/><rect x="12.5" y="4.5" width="2" height="2" fill="#000"/><rect x="14.5" y="4.5" width="10" height="2" fill="#fff"/><rect x="24.5" y="4.5" width="4" height="2" fill="#000"/><rect x="2.5" y="6.5" width="2" height="2" fill="#000"/><rect x="4.5" y="6.5" width="4" height="2" fill="#fff"/><rect x="8.5" y="6.5" width="4" height="2" fill="#000"/><rect x="12.5" y="6.5" width="2" height="2" fill="#fff"/><rect x="14.5" y="6.5" width="10" height="2" fill="#c8c8c8"/><rect x="24.5" y="6.5" width="4" height="2" fill="#fff"/><rect x="28.5" y="6.5" width="2" height="2" fill="#000"/><rect x="2.5" y="8.5" width="2" height="2" fill="#000"/><rect x="4.5" y="8.5" width="4" height="2" fill="#c8c8c8"/><rect x="8.5" y="8.5" width="4" height="2" fill="#fff"/><rect x="12.5" y="8.5" width="12" height="2" fill="#c8c8c8"/><rect x="24.5" y="8.5" width="6" height="2" fill="#fff"/><rect x="30.5" y="8.5" width="2" height="2" fill="#000"/><rect x="2.5" y="10.5" width="2" height="2" fill="#000"/><rect x="4.5" y="10.5" width="4" height="2" fill="#b4b4b4"/><rect x="8.5" y="10.5" width="4" height="2" fill="#c8c8c8"/><rect x="12.5" y="10.5" width="12" height="2" fill="#b4b4b4"/><rect x="24.5" y="10.5" width="6" height="2" fill="#c8c8c8"/><rect x="30.5" y="10.5" width="2" height="2" fill="#fff"/><rect x="32.5" y="10.5" width="2" height="2" fill="#000"/><rect x="2.5" y="12.5" width="2" height="2" fill="#000"/><rect x="4.5" y="12.5" width="4" height="2" fill="#6e6e6e"/><rect x="8.5" y="12.5" width="4" height="2" fill="#000"/><rect x="12.5" y="12.5" width="10" height="2" fill="#6e6e6e"/><rect x="22.5" y="12.5" width="6" height="2" fill="#000"/><rect x="28.5" y="12.5" width="2" height="2" fill="#6e6e6e"/><rect x="30.5" y="12.5" width="2" height="2" fill="#fff"/><rect x="32.5" y="12.5" width="2" height="2" fill="#000"/><rect x="4.5" y="14.5" width="4" height="2" fill="#000"/><rect x="12.5" y="14.5" width="12" height="2" fill="#000"/><rect x="30.5" y="14.5" width="4" height="2" fill="#000"/><rect x="16.5" y="16.5" width="4" height="2" fill="#00008c"/><rect x="20.5" y="16.5" width="2" height="2" fill="#0a1eff"/><rect x="32.5" y="16.5" width="2" height="2" fill="#000"/><rect x="16.5" y="18.5" width="4" height="2" fill="#00008c"/><rect x="20.5" y="18.5" width="2" height="2" fill="#0a1eff"/><rect x="16.5" y="20.5" width="4" height="2" fill="#00008c"/><rect x="20.5" y="20.5" width="2" height="2" fill="#0a1eff"/><rect x="16.5" y="22.5" width="4" height="2" fill="#00008c"/><rect x="20.5" y="22.5" width="2" height="2" fill="#0a1eff"/><rect x="14.5" y="24.5" width="6" height="2" fill="#00008c"/><rect x="20.5" y="24.5" width="4" height="2" fill="#0a1eff"/><rect x="14.5" y="26.5" width="6" height="2" fill="#00008c"/><rect x="20.5" y="26.5" width="4" height="2" fill="#0a1eff"/><rect x="14.5" y="28.5" width="6" height="2" fill="#00008c"/><rect x="20.5" y="28.5" width="4" height="2" fill="#0a1eff"/><rect x="14.5" y="30.5" width="6" height="2" fill="#00008c"/><rect x="20.5" y="30.5" width="4" height="2" fill="#0a1eff"/></svg></div>
</div>

<div class="abs" style="left:2339px;top:0;width:58px;height:16px;background:linear-gradient(90deg,#111 0,#111 3px,#cdcdcd 3px,#c6c6c6 36px,#dcdcdc 37px,#d6d6d6 58px)"><div class="abs" style="left:5px;top:2px;width:51px;height:1.5px;background:#3a3a3a"></div><div class="abs" style="left:0;top:0;width:3px;height:2px;background:#64707f"></div><div class="abs" style="left:13px;top:11px;width:19px;height:2px;background:#a8a8a8"></div></div>

<div class="abs" style="left:1442px;top:17px;width:8px;height:760px;background:linear-gradient(180deg,rgba(20,24,32,.08) 0,rgba(20,24,32,.42) 130px,rgba(20,24,32,.46) 760px)"></div>
<div class="abs" style="left:0;top:17px;width:8px;height:760px;background:linear-gradient(180deg,rgba(20,24,32,0) 0,rgba(20,24,32,.22) 130px,rgba(20,24,32,.3) 600px,rgba(20,24,32,.3) 760px)"></div>
<!-- ASC WINDOW -->
<div class="abs" style="left:3px;top:772px;width:2543px;height:878px;border-radius:10px;background:#808080;box-shadow:0 0 0 1px rgba(0,0,0,.28),0 30px 40px -8px rgba(0,0,0,.52),0 0 18px rgba(0,0,0,.17)"></div>
<div class="win" id="ascwin" style="left:3px;top:772px;width:2539px;height:878px;border-radius:10px 10px 9px 9px;background:#c0c0c0">
  <div class="abs" style="left:0;top:0;width:100%;height:43px;background:linear-gradient(#e9e9e9,#d3d3d3);border-bottom:1px solid #b1b1b1;box-shadow:inset 0 1px 0 #f4f4f4"></div>
  <div class="tl" style="left:17px;top:10px;background:#fc5c57;box-shadow:inset 0 0 0 1px #df4540"></div>
  <div class="tl" style="left:57px;top:10px;background:#fdbc40;box-shadow:inset 0 0 0 1px #de9f34"></div>
  <div class="tl" style="left:97px;top:10px;background:#34c84a;box-shadow:inset 0 0 0 1px #27aa35"></div>
  <svg class="abs" style="left:1155px;top:6px" width="32" height="32" viewBox="0 0 32 32"><rect width="32" height="32" fill="#d0d0d0"/><path d="M0 15.600h11M14.200 10.500L23 .8v2.500M14.200 20l8.500 7.200v3.800" fill="none" stroke="#000" stroke-width="1.100"/><rect x="11.500" y="9.500" width="2.700" height="12.500" fill="none" stroke="#000" stroke-width="1.100"/><path d="M21.800 26.500l-5-1.800 2.600-3.200z" fill="#000"/></svg>
  <div class="title" style="top:7.500px;left:1196px;right:auto;color:#4a4a4a;letter-spacing:.25px;font-size:26.8px">HA-Simple.asc</div>
  <div class="abs" style="left:0;top:44px;width:100%;height:62px;background:#ececec"></div>
  <div class="ic" style="left:49px;top:60px"><svg width="37" height="37" viewBox="0 0 37 37" shape-rendering="crispEdges"><rect x="6.5" y="2.5" width="4" height="2" fill="#b0b0b0"/><rect x="22.5" y="2.5" width="8" height="2" fill="#000"/><rect x="10.5" y="4.5" width="2" height="2" fill="#b0b0b0"/><rect x="22.5" y="4.5" width="2" height="2" fill="#000"/><rect x="24.5" y="4.5" width="2" height="2" fill="#fff"/><rect x="26.5" y="4.5" width="4" height="2" fill="#000"/><rect x="2.5" y="6.5" width="4" height="2" fill="#b0b0b0"/><rect x="22.5" y="6.5" width="6" height="2" fill="#000"/><rect x="6.5" y="8.5" width="2" height="2" fill="#b0b0b0"/><rect x="12.5" y="8.5" width="2" height="2" fill="#b0b0b0"/><rect x="14.5" y="8.5" width="4" height="2" fill="#000"/><rect x="20.5" y="8.5" width="4" height="2" fill="#000"/><rect x="24.5" y="8.5" width="2" height="2" fill="#b0b0b0"/><rect x="10.5" y="10.5" width="2" height="2" fill="#b0b0b0"/><rect x="12.5" y="10.5" width="2" height="2" fill="#000"/><rect x="18.5" y="10.5" width="6" height="2" fill="#000"/><rect x="18.5" y="12.5" width="6" height="2" fill="#000"/><rect x="16.5" y="14.5" width="8" height="2" fill="#000"/><rect x="28.5" y="14.5" width="2" height="2" fill="#000"/><rect x="30.5" y="14.5" width="2" height="2" fill="#b0b0b0"/><rect x="14.5" y="16.5" width="6" height="2" fill="#000"/><rect x="20.5" y="16.5" width="2" height="2" fill="#b0b0b0"/><rect x="24.5" y="16.5" width="6" height="2" fill="#000"/><rect x="12.5" y="18.5" width="6" height="2" fill="#000"/><rect x="10.5" y="20.5" width="2" height="2" fill="#000"/><rect x="18.5" y="20.5" width="2" height="2" fill="#000"/><rect x="20.5" y="20.5" width="2" height="2" fill="#b0b0b0"/><rect x="2.5" y="22.5" width="8" height="2" fill="#000"/><rect x="10.5" y="22.5" width="2" height="2" fill="#b0b0b0"/><rect x="20.5" y="22.5" width="2" height="2" fill="#000"/><rect x="22.5" y="22.5" width="2" height="2" fill="#b0b0b0"/><rect x="2.5" y="24.5" width="2" height="2" fill="#000"/><rect x="20.5" y="24.5" width="2" height="2" fill="#000"/><rect x="22.5" y="24.5" width="2" height="2" fill="#b0b0b0"/><rect x="20.5" y="26.5" width="2" height="2" fill="#000"/><rect x="18.5" y="28.5" width="2" height="2" fill="#000"/><rect x="18.5" y="30.5" width="2" height="2" fill="#000"/><rect x="20.5" y="30.5" width="2" height="2" fill="#b0b0b0"/></svg></div>
  <div class="ic" style="left:117px;top:60px;background:#f8f8f8;box-shadow:0 1px 2px rgba(0,0,0,.25),0 0 0 1px rgba(0,0,0,.06)"><svg width="37" height="37" viewBox="0 0 37 37" shape-rendering="crispEdges"><rect x="16.5" y="2.5" width="4" height="2" fill="#858585"/><rect x="14.5" y="4.5" width="2" height="2" fill="#858585"/><rect x="16.5" y="4.5" width="4" height="2" fill="#fbfbfb"/><rect x="20.5" y="4.5" width="4" height="2" fill="#858585"/><rect x="12.5" y="6.5" width="2" height="2" fill="#858585"/><rect x="14.5" y="6.5" width="2" height="2" fill="#fbfbfb"/><rect x="16.5" y="6.5" width="2" height="2" fill="#858585"/><rect x="18.5" y="6.5" width="2" height="2" fill="#fbfbfb"/><rect x="20.5" y="6.5" width="2" height="2" fill="#858585"/><rect x="22.5" y="6.5" width="2" height="2" fill="#fbfbfb"/><rect x="24.5" y="6.5" width="2" height="2" fill="#858585"/><rect x="12.5" y="8.5" width="2" height="2" fill="#858585"/><rect x="14.5" y="8.5" width="2" height="2" fill="#fbfbfb"/><rect x="16.5" y="8.5" width="2" height="2" fill="#858585"/><rect x="18.5" y="8.5" width="2" height="2" fill="#fbfbfb"/><rect x="20.5" y="8.5" width="2" height="2" fill="#858585"/><rect x="22.5" y="8.5" width="2" height="2" fill="#fbfbfb"/><rect x="24.5" y="8.5" width="4" height="2" fill="#858585"/><rect x="12.5" y="10.5" width="2" height="2" fill="#858585"/><rect x="14.5" y="10.5" width="2" height="2" fill="#fbfbfb"/><rect x="16.5" y="10.5" width="2" height="2" fill="#858585"/><rect x="18.5" y="10.5" width="2" height="2" fill="#fbfbfb"/><rect x="20.5" y="10.5" width="2" height="2" fill="#858585"/><rect x="22.5" y="10.5" width="2" height="2" fill="#fbfbfb"/><rect x="24.5" y="10.5" width="2" height="2" fill="#858585"/><rect x="26.5" y="10.5" width="2" height="2" fill="#fbfbfb"/><rect x="28.5" y="10.5" width="2" height="2" fill="#858585"/><rect x="12.5" y="12.5" width="2" height="2" fill="#858585"/><rect x="14.5" y="12.5" width="2" height="2" fill="#fbfbfb"/><rect x="16.5" y="12.5" width="2" height="2" fill="#858585"/><rect x="18.5" y="12.5" width="2" height="2" fill="#fbfbfb"/><rect x="20.5" y="12.5" width="2" height="2" fill="#858585"/><rect x="22.5" y="12.5" width="2" height="2" fill="#fbfbfb"/><rect x="24.5" y="12.5" width="2" height="2" fill="#858585"/><rect x="26.5" y="12.5" width="2" height="2" fill="#fbfbfb"/><rect x="28.5" y="12.5" width="2" height="2" fill="#858585"/><rect x="12.5" y="14.5" width="2" height="2" fill="#858585"/><rect x="14.5" y="14.5" width="2" height="2" fill="#fbfbfb"/><rect x="16.5" y="14.5" width="2" height="2" fill="#858585"/><rect x="18.5" y="14.5" width="2" height="2" fill="#fbfbfb"/><rect x="20.5" y="14.5" width="2" height="2" fill="#858585"/><rect x="22.5" y="14.5" width="2" height="2" fill="#fbfbfb"/><rect x="24.5" y="14.5" width="2" height="2" fill="#858585"/><rect x="26.5" y="14.5" width="2" height="2" fill="#fbfbfb"/><rect x="28.5" y="14.5" width="2" height="2" fill="#858585"/><rect x="6.5" y="16.5" width="4" height="2" fill="#858585"/><rect x="12.5" y="16.5" width="2" height="2" fill="#858585"/><rect x="14.5" y="16.5" width="2" height="2" fill="#fbfbfb"/><rect x="16.5" y="16.5" width="2" height="2" fill="#858585"/><rect x="18.5" y="16.5" width="2" height="2" fill="#fbfbfb"/><rect x="20.5" y="16.5" width="2" height="2" fill="#858585"/><rect x="22.5" y="16.5" width="2" height="2" fill="#fbfbfb"/><rect x="24.5" y="16.5" width="2" height="2" fill="#858585"/><rect x="26.5" y="16.5" width="2" height="2" fill="#fbfbfb"/><rect x="28.5" y="16.5" width="2" height="2" fill="#858585"/><rect x="4.5" y="18.5" width="2" height="2" fill="#858585"/><rect x="6.5" y="18.5" width="4" height="2" fill="#fbfbfb"/><rect x="10.5" y="18.5" width="4" height="2" fill="#858585"/><rect x="14.5" y="18.5" width="2" height="2" fill="#fbfbfb"/><rect x="16.5" y="18.5" width="2" height="2" fill="#858585"/><rect x="18.5" y="18.5" width="2" height="2" fill="#fbfbfb"/><rect x="20.5" y="18.5" width="2" height="2" fill="#858585"/><rect x="22.5" y="18.5" width="2" height="2" fill="#fbfbfb"/><rect x="24.5" y="18.5" width="2" height="2" fill="#858585"/><rect x="26.5" y="18.5" width="2" height="2" fill="#fbfbfb"/><rect x="28.5" y="18.5" width="2" height="2" fill="#858585"/><rect x="6.5" y="20.5" width="2" height="2" fill="#858585"/><rect x="8.5" y="20.5" width="4" height="2" fill="#fbfbfb"/><rect x="12.5" y="20.5" width="2" height="2" fill="#858585"/><rect x="14.5" y="20.5" width="14" height="2" fill="#fbfbfb"/><rect x="28.5" y="20.5" width="2" height="2" fill="#858585"/><rect x="8.5" y="22.5" width="2" height="2" fill="#858585"/><rect x="10.5" y="22.5" width="18" height="2" fill="#fbfbfb"/><rect x="28.5" y="22.5" width="2" height="2" fill="#858585"/><rect x="8.5" y="24.5" width="2" height="2" fill="#858585"/><rect x="10.5" y="24.5" width="18" height="2" fill="#fbfbfb"/><rect x="28.5" y="24.5" width="2" height="2" fill="#858585"/><rect x="10.5" y="26.5" width="2" height="2" fill="#858585"/><rect x="12.5" y="26.5" width="16" height="2" fill="#fbfbfb"/><rect x="28.5" y="26.5" width="2" height="2" fill="#858585"/><rect x="12.5" y="28.5" width="2" height="2" fill="#858585"/><rect x="14.5" y="28.5" width="12" height="2" fill="#fbfbfb"/><rect x="26.5" y="28.5" width="2" height="2" fill="#858585"/><rect x="12.5" y="30.5" width="16" height="2" fill="#858585"/></svg></div>
  <div class="ic" style="left:185px;top:60px"><svg width="37" height="37" viewBox="0 0 37 37" shape-rendering="crispEdges"><rect x="14.5" y="2.5" width="10" height="2" fill="#000"/><rect x="4.5" y="4.5" width="4" height="2" fill="#000"/><rect x="12.5" y="4.5" width="2" height="2" fill="#000"/><rect x="14.5" y="4.5" width="10" height="2" fill="#fff"/><rect x="24.5" y="4.5" width="4" height="2" fill="#000"/><rect x="2.5" y="6.5" width="2" height="2" fill="#000"/><rect x="4.5" y="6.5" width="4" height="2" fill="#fff"/><rect x="8.5" y="6.5" width="4" height="2" fill="#000"/><rect x="12.5" y="6.5" width="2" height="2" fill="#fff"/><rect x="14.5" y="6.5" width="10" height="2" fill="#c8c8c8"/><rect x="24.5" y="6.5" width="4" height="2" fill="#fff"/><rect x="28.5" y="6.5" width="2" height="2" fill="#000"/><rect x="2.5" y="8.5" width="2" height="2" fill="#000"/><rect x="4.5" y="8.5" width="4" height="2" fill="#c8c8c8"/><rect x="8.5" y="8.5" width="4" height="2" fill="#fff"/><rect x="12.5" y="8.5" width="12" height="2" fill="#c8c8c8"/><rect x="24.5" y="8.5" width="6" height="2" fill="#fff"/><rect x="30.5" y="8.5" width="2" height="2" fill="#000"/><rect x="2.5" y="10.5" width="2" height="2" fill="#000"/><rect x="4.5" y="10.5" width="4" height="2" fill="#b4b4b4"/><rect x="8.5" y="10.5" width="4" height="2" fill="#c8c8c8"/><rect x="12.5" y="10.5" width="12" height="2" fill="#b4b4b4"/><rect x="24.5" y="10.5" width="6" height="2" fill="#c8c8c8"/><rect x="30.5" y="10.5" width="2" height="2" fill="#fff"/><rect x="32.5" y="10.5" width="2" height="2" fill="#000"/><rect x="2.5" y="12.5" width="2" height="2" fill="#000"/><rect x="4.5" y="12.5" width="4" height="2" fill="#6e6e6e"/><rect x="8.5" y="12.5" width="4" height="2" fill="#000"/><rect x="12.5" y="12.5" width="10" height="2" fill="#6e6e6e"/><rect x="22.5" y="12.5" width="6" height="2" fill="#000"/><rect x="28.5" y="12.5" width="2" height="2" fill="#6e6e6e"/><rect x="30.5" y="12.5" width="2" height="2" fill="#fff"/><rect x="32.5" y="12.5" width="2" height="2" fill="#000"/><rect x="4.5" y="14.5" width="4" height="2" fill="#000"/><rect x="12.5" y="14.5" width="12" height="2" fill="#000"/><rect x="30.5" y="14.5" width="4" height="2" fill="#000"/><rect x="16.5" y="16.5" width="4" height="2" fill="#00008c"/><rect x="20.5" y="16.5" width="2" height="2" fill="#0a1eff"/><rect x="32.5" y="16.5" width="2" height="2" fill="#000"/><rect x="16.5" y="18.5" width="4" height="2" fill="#00008c"/><rect x="20.5" y="18.5" width="2" height="2" fill="#0a1eff"/><rect x="16.5" y="20.5" width="4" height="2" fill="#00008c"/><rect x="20.5" y="20.5" width="2" height="2" fill="#0a1eff"/><rect x="16.5" y="22.5" width="4" height="2" fill="#00008c"/><rect x="20.5" y="22.5" width="2" height="2" fill="#0a1eff"/><rect x="14.5" y="24.5" width="6" height="2" fill="#00008c"/><rect x="20.5" y="24.5" width="4" height="2" fill="#0a1eff"/><rect x="14.5" y="26.5" width="6" height="2" fill="#00008c"/><rect x="20.5" y="26.5" width="4" height="2" fill="#0a1eff"/><rect x="14.5" y="28.5" width="6" height="2" fill="#00008c"/><rect x="20.5" y="28.5" width="4" height="2" fill="#0a1eff"/><rect x="14.5" y="30.5" width="6" height="2" fill="#00008c"/><rect x="20.5" y="30.5" width="4" height="2" fill="#0a1eff"/></svg></div>
  <div class="search" style="left:2294px;top:55px;width:204px;height:44px">
    <svg class="abs" style="left:16px;top:10px" width="24" height="24" viewBox="0 0 24 24"><circle cx="9.5" cy="9.5" r="7.8" fill="none" stroke="#4a4a4a" stroke-width="1.8"/><path d="M15 15L23 23" stroke="#4a4a4a" stroke-width="2"/></svg>
    <span style="left:50px;top:6px;letter-spacing:.4px">(normal)</span>
  </div>
  <div class="abs" style="left:0;top:106px"><svg class="cv" width="2539" height="772" viewBox="0 0 2539 772"><g fill="none" stroke="#0c1cf5" stroke-width="2" stroke-linejoin="round"><polyline points="1074.4,474.5 1146.6,510.6 1074.4,546.7 1074.4,474.5"/><polyline points="1078.9,492.6 1087.9,492.6"/><polyline points="1078.9,528.6 1087.9,528.6"/><polyline points="1083.4,533.1 1083.4,524.1"/><polyline points="1110.5,474.5 1110.5,492.6"/><polyline points="1110.5,546.7 1110.5,528.6"/><polyline points="1115.0,488.0 1124.0,488.0"/><polyline points="1119.5,483.5 1119.5,492.6"/><polyline points="1115.0,533.1 1124.0,533.1"/><polyline points="1146.6,510.6 1218.7,510.6"/><polyline points="1218.7,510.6 1227.7,510.6 1236.8,492.6 1254.8,528.6 1272.8,492.6 1290.9,528.6 1299.9,510.6 1308.9,510.6"/><polyline points="1308.9,510.6 1525.4,510.6"/><polyline points="1525.4,510.6 1534.4,510.6 1543.4,492.6 1561.5,528.6 1579.5,492.6 1597.6,528.6 1606.6,510.6 1615.6,510.6"/><polyline points="1615.6,510.6 1705.8,510.6"/><polyline points="1110.5,474.5 1110.5,456.5"/><polyline points="1110.5,546.7 1110.5,564.7"/><polyline points="1074.4,492.6 1020.3,492.6 1020.3,618.8"/><polyline points="1020.3,600.8 1218.7,600.8"/><polyline points="1218.7,600.8 1227.7,600.8 1236.8,582.8 1254.8,618.8 1272.8,582.8 1290.9,618.8 1299.9,600.8 1308.9,600.8"/><polyline points="1308.9,600.8 1363.0,600.8 1363.0,510.6"/><polyline points="1200.7,600.8 1200.7,691.0 1218.7,691.0"/><polyline points="1218.7,691.0 1250.3,691.0"/><polyline points="1250.3,673.0 1250.3,709.0"/><polyline points="1259.3,673.0 1259.3,709.0"/><polyline points="1259.3,691.0 1290.9,691.0"/><polyline points="1290.9,691.0 1327.0,691.0 1327.0,600.8"/><polyline points="1020.3,618.8 1020.3,627.9 1038.3,636.9 1002.2,654.9 1038.3,673.0 1002.2,691.0 1020.3,700.0 1020.3,709.0"/><polyline points="1020.3,709.0 1020.3,745.1"/><polyline points="1004.0,745.1 1036.5,745.1 1020.3,760.7 1004.0,745.1"/><polyline points="1074.4,528.6 587.3,528.6"/><polyline points="912.0,528.6 912.0,618.8"/><polyline points="912.0,618.8 912.0,627.9 930.1,636.9 894.0,654.9 930.1,673.0 894.0,691.0 912.0,700.0 912.0,709.0"/><polyline points="912.0,709.0 912.0,745.1"/><polyline points="895.8,745.1 928.3,745.1 912.0,760.7 895.8,745.1"/><polyline points="659.5,528.6 659.5,582.8"/><polyline points="650.5,605.3 668.5,605.3"/><polyline points="659.5,596.3 659.5,614.3"/><polyline points="650.5,650.4 668.5,650.4"/><polyline points="659.5,582.8 659.5,591.8"/><polyline points="659.5,663.9 659.5,673.0"/><polyline points="659.5,673.0 659.5,745.1"/><polyline points="643.2,745.1 675.7,745.1 659.5,760.7 643.2,745.1"/><polyline points="1218.7,294.1 1290.9,330.2 1218.7,366.3 1218.7,294.1"/><polyline points="1223.2,312.2 1232.2,312.2"/><polyline points="1223.2,348.2 1232.2,348.2"/><polyline points="1227.7,352.8 1227.7,343.7"/><polyline points="1254.8,294.1 1254.8,312.2"/><polyline points="1254.8,366.3 1254.8,348.2"/><polyline points="1259.3,307.6 1268.3,307.6"/><polyline points="1263.8,303.1 1263.8,312.2"/><polyline points="1259.3,352.8 1268.3,352.8"/><polyline points="1290.9,330.2 1363.0,330.2"/><polyline points="1363.0,330.2 1372.1,330.2 1381.1,312.2 1399.1,348.2 1417.2,312.2 1435.2,348.2 1444.2,330.2 1453.2,330.2"/><polyline points="1453.2,330.2 1453.2,510.6"/><polyline points="1218.7,312.2 1182.6,312.2 1182.6,438.4 1327.0,438.4 1327.0,330.2"/><polyline points="1218.7,348.2 1164.6,348.2 1164.6,510.6"/><polyline points="1254.8,294.1 1254.8,276.1"/><polyline points="1254.8,366.3 1254.8,384.3"/><polyline points="1651.7,510.6 1651.7,582.8"/><polyline points="1651.7,582.8 1651.7,591.8 1669.7,600.8 1633.6,618.8 1669.7,636.9 1633.6,654.9 1651.7,663.9 1651.7,673.0"/><polyline points="1651.7,673.0 1651.7,727.1"/><polyline points="1635.4,727.1 1667.9,727.1 1651.7,742.6 1635.4,727.1"/><polyline points="1651.7,564.7 1723.8,564.7 1723.8,600.8"/><polyline points="1723.8,600.8 1723.8,632.4"/><polyline points="1705.8,632.4 1741.9,632.4"/><polyline points="1705.8,641.4 1741.9,641.4"/><polyline points="1723.8,641.4 1723.8,673.0"/><polyline points="1723.8,673.0 1723.8,691.0 1651.7,691.0"/><polyline points="1841.1,82.1 1859.1,82.1"/><polyline points="1850.1,73.1 1850.1,91.2"/><polyline points="1841.1,127.2 1859.1,127.2"/><polyline points="1850.1,59.6 1850.1,68.6"/><polyline points="1850.1,140.8 1850.1,149.8"/><polyline points="1841.1,208.4 1859.1,208.4"/><polyline points="1850.1,199.4 1850.1,217.4"/><polyline points="1841.1,253.5 1859.1,253.5"/><polyline points="1850.1,185.9 1850.1,194.9"/><polyline points="1850.1,267.1 1850.1,276.1"/><polyline points="1850.1,59.6 1850.1,23.5"/><polyline points="1850.1,149.8 1850.1,185.9"/><polyline points="1850.1,276.1 1850.1,312.2"/><polyline points="1850.1,167.8 1958.4,167.8 1958.4,185.9"/><polyline points="1942.1,185.9 1974.6,185.9 1958.4,201.4 1942.1,185.9"/><circle cx="659.5" cy="627.9" r="36.1"/><circle cx="1850.1" cy="104.7" r="36.1"/><circle cx="1850.1" cy="231.0" r="36.1"/></g><g fill="#0c1cf5"><rect x="1158.6" y="504.6" width="12" height="12"/><rect x="1357.0" y="504.6" width="12" height="12"/><rect x="1447.2" y="504.6" width="12" height="12"/><rect x="1645.7" y="504.6" width="12" height="12"/><rect x="1014.3" y="594.8" width="12" height="12"/><rect x="1194.7" y="594.8" width="12" height="12"/><rect x="1321.0" y="594.8" width="12" height="12"/><rect x="906.0" y="522.6" width="12" height="12"/><rect x="653.5" y="522.6" width="12" height="12"/><rect x="1321.0" y="324.2" width="12" height="12"/><rect x="1645.7" y="558.7" width="12" height="12"/><rect x="1645.7" y="685.0" width="12" height="12"/><rect x="1844.1" y="161.8" width="12" height="12"/></g><g font-family="'DejaVu Sans','Liberation Sans',sans-serif" font-size="25.2" fill="#000" stroke="#000" stroke-width=".35"><text x="659.0" y="76.6" textLength="537.0">.lib JRC_OPAMP/NJM4556A/njm4556a_3.lib</text><text x="659.0" y="101.8" textLength="505.5">.lib JRC_OPAMP/NJM4580/njm4580_2.lib</text><text x="659.0" y="127.0" textLength="223.0">.lib My/OPA134.lib</text><text x="659.0" y="151.6" textLength="184.0">.param freq=1k</text><text x="659.0" y="194.3" textLength="354.6">.tran 0 10m 0 {1/freq/1000}</text><text x="659.0" y="219.5" textLength="319.0">.four {freq} v(Vout) v(Vin)</text><text x="659.0" y="244.0" textLength="256.0">.option plotwinsize=0</text><text x="659.0" y="293.8" fill="#1010d0" stroke="#1010d0" textLength="221.0">.ac oct 10 1 1Meg</text><text x="1128.6" y="483.2">U1</text><text x="1129.0" y="555.2" textLength="164.0">NJM4556A_S</text><text x="1272.7" y="303.2">U2</text><text x="1273.0" y="375.2" textLength="164.0">NJM4556A_S</text><text x="1262.0" y="485.2" text-anchor="middle">R1</text><text x="1264.5" y="554.7" text-anchor="middle">47</text><text x="1263.0" y="574.9" text-anchor="middle">R5</text><text x="1264.0" y="642.2" text-anchor="middle">10k</text><text x="1254.0" y="665.7" text-anchor="middle">C2</text><text x="1255.4" y="733.2" text-anchor="middle">10p</text><text x="1407.5" y="304.2" text-anchor="middle">R2</text><text x="1408.0" y="374.2" text-anchor="middle">47</text><text x="1570.0" y="485.2" text-anchor="middle">R9</text><text x="1570.0" y="552.2" text-anchor="middle">2.2</text><text x="1707.0" y="519.2" textLength="56.0">Vout</text><text x="587.0" y="520.5">Vin</text><text x="687.5" y="591.2">V3</text><text x="687.5" y="681.2" textLength="248.0">SINE(0 300m {freq})</text><text x="687.5" y="706.2">AC 1</text><text x="935.5" y="654.2">R7</text><text x="937.0" y="695.7">10k</text><text x="1043.0" y="654.2">R8</text><text x="1045.0" y="695.7">3k</text><text x="1628.0" y="614.2" text-anchor="end">R6</text><text x="1628.0" y="654.2" text-anchor="end">16</text><text x="1713.5" y="618.2" text-anchor="end">C1</text><text x="1713.5" y="672.7" text-anchor="end">1n</text><text x="1688.0" y="717.2" fill="#1010d0" stroke="#1010d0" textLength="220.5">Load (Headphone)</text><text x="1878.0" y="68.2">V1</text><text x="1878.0" y="157.7">9</text><text x="1878.0" y="193.7">V2</text><text x="1878.0" y="284.7">9</text><text transform="translate(1112.5,431.0) rotate(-90)" x="0" y="9.2" text-anchor="middle">VDD</text><text transform="translate(1112.5,589.0) rotate(-90)" x="0" y="9.2" text-anchor="middle">VSS</text><text transform="translate(1257.5,250.0) rotate(-90)" x="0" y="9.2" text-anchor="middle">VDD</text><text transform="translate(1257.5,409.0) rotate(-90)" x="0" y="9.2" text-anchor="middle">VSS</text><text transform="translate(1837.0,42.0) rotate(-90)" x="0" y="9.2" text-anchor="middle">VDD</text><text transform="translate(1837.0,295.0) rotate(-90)" x="0" y="9.2" text-anchor="middle">VSS</text></g></svg></div>
</div>

</body>
</html>
